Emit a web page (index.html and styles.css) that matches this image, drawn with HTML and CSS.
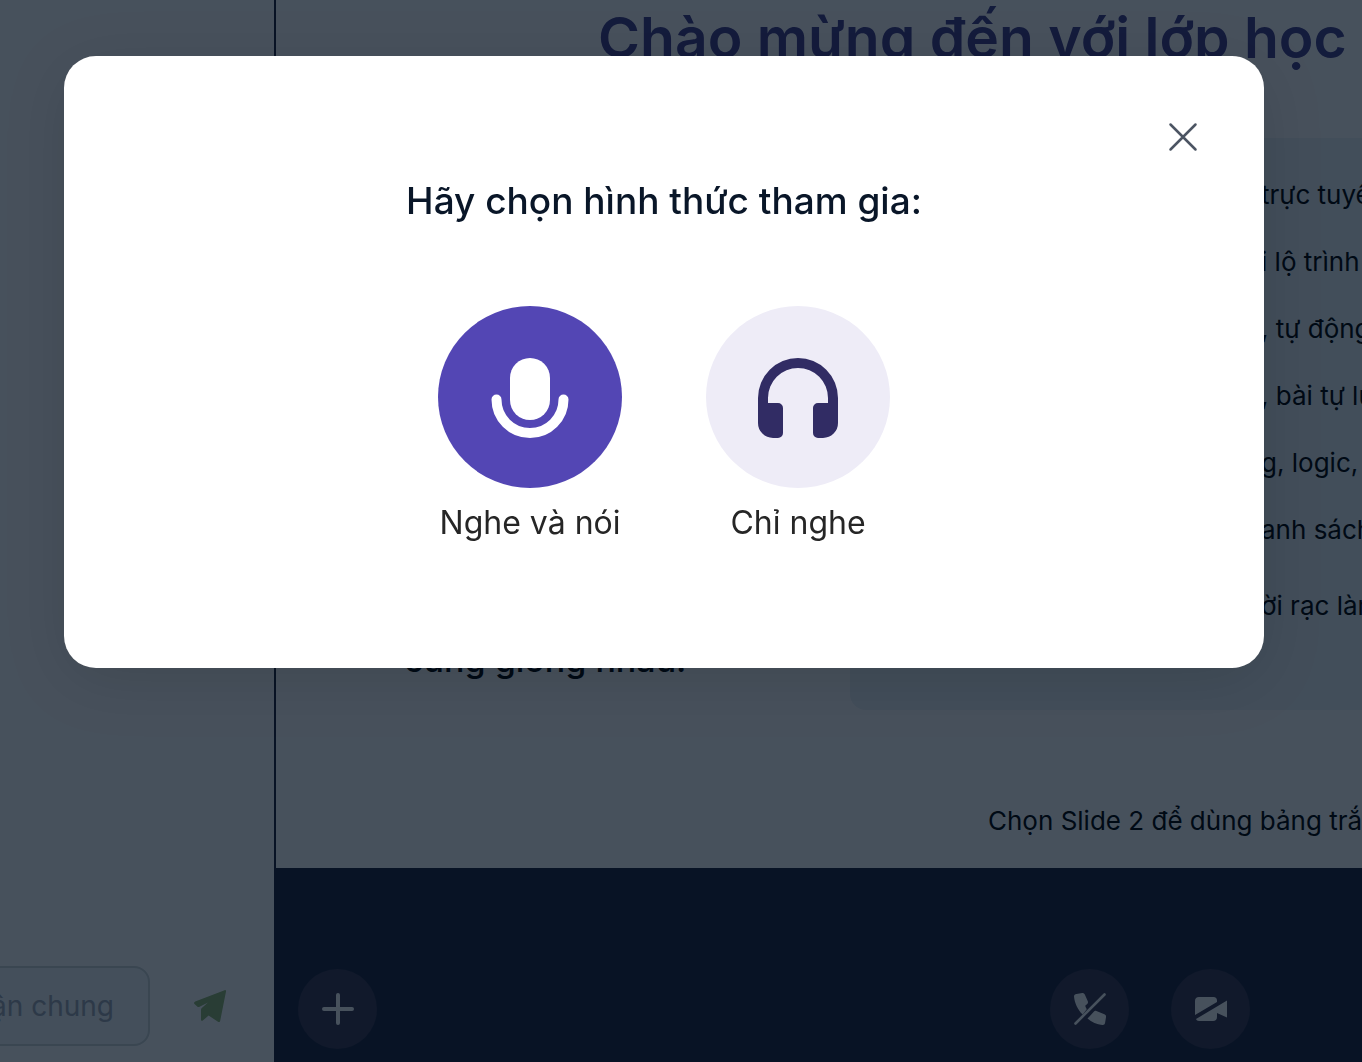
FILE: index.html
```html
<!DOCTYPE html>
<html lang="vi">
<head>
    <meta charset="UTF-8">
    <meta name="viewport" content="width=device-width, initial-scale=1.0">
    <title>Lớp học</title>
    <link rel="stylesheet" href="styles.css">
</head>
<body>
    <div class="classroom">
        <aside class="chat">
            <form class="chat-form">
                <input type="text" class="chat-input" aria-label="Thảo luận chung" placeholder="Thảo luận chung">
                <button type="button" class="send-button" aria-label="Gửi">
                    <svg width="32" height="32" viewBox="0 0 32 32"><path fill="currentColor" d="M30.6.2 1.2 11.4C-.1 12-.3 13.2.5 14.1l3 2.7c.5.4 1.1.4 1.6.1L14 12.5 7.8 18c-.5.5-.8 1-.8 1.7v10c0 1.2 1 1.5 1.8.8l5.8-5 9.4 6.2c1.2.7 2 .2 2.2-1L32 1.5C32.2.3 31.5-.1 30.6.2z"/></svg>
                </button>
            </form>
        </aside>
        <main class="stage">
            <section class="slide">
                <h1 class="slide-title">Chào mừng đến với lớp học</h1>
                <div class="slide-columns">
                    <p class="slide-quote">cũng giống nhau.</p>
                    <ul class="features">
                        <li>trực tuyến</li>
                        <li>i lộ trình</li>
                        <li>, tự động</li>
                        <li>, bài tự luận</li>
                        <li>g, logic,</li>
                        <li>anh sách</li>
                        <li class="last">ời rạc làm</li>
                    </ul>
                </div>
                <p class="slide-note">Chọn Slide 2 để dùng bảng trắng</p>
            </section>
            <footer class="toolbar">
                <button type="button" class="tool-button" aria-label="Thêm">
                    <svg width="32" height="32" viewBox="0 0 32 32"><path d="M16 2v28M2 16h28" fill="none" stroke="currentColor" stroke-width="4" stroke-linecap="round"/></svg>
                </button>
                <div class="call-tools">
                    <button type="button" class="tool-button" aria-label="Rời cuộc gọi">
                        <svg width="32" height="32" viewBox="0 0 32 32">
                            <path fill="currentColor" d="M2.5.9 8.3 0c1.2-.1 2 .4 2.5 1.4l3 6.8c.4 1 .2 2-.6 2.7l-2 1.9c.3 1.2.8 2.3 1.6 3.5L8.7 21.6C3.5 16.4.5 9.8 0 3.2 0 2 1 1.1 2.5.9zM13.5 25.6l6.5-7c.6-.9 1.4-1 2.4-.6l8 3.2c1.2.5 1.8 1.3 1.7 2.5l-1 6c-.3 1.6-1.3 2.4-2.8 2.3-5.4-.3-10.600-2.600-14.800-6.400z"/>
                            <path d="M1.5 30.5 30.5 1.5" stroke="currentColor" stroke-width="2.6" stroke-linecap="round"/>
                        </svg>
                    </button>
                    <button type="button" class="tool-button" aria-label="Tắt camera">
                        <svg width="32" height="32" viewBox="0 0 32 32">
                            <path fill="currentColor" d="M4 4h14.5C20.7 4 22 5.3 22 7.5V9L0 22V8C0 5.5 1.5 4 4 4zM32 7.5v17L22 20v4c0 2.5-1.5 4-4 4H4c-1.5 0-2.6-.7-3-2L22 13.5z"/>
                        </svg>
                    </button>
                </div>
            </footer>
        </main>
    </div>

    <div class="overlay">
        <div class="modal" role="dialog" aria-labelledby="modal-title">
            <button type="button" class="close-button" aria-label="Đóng">
                <svg width="30" height="30" viewBox="0 0 30 30"><path d="M2.5 2.5l25 25M27.5 2.5l-25 25" fill="none" stroke="currentColor" stroke-width="2.5" stroke-linecap="round"/></svg>
            </button>
            <h2 class="modal-title" id="modal-title">Hãy chọn hình thức tham gia:</h2>
            <div class="options">
                <button type="button" class="option">
                    <span class="option-icon primary">
                        <svg width="80" height="80" viewBox="0 0 80 80">
                            <rect x="20" y="0" width="40" height="62" rx="20" fill="currentColor"/>
                            <path d="M6.5 41.5a33.5 33.5 0 0 0 67 0" fill="none" stroke="currentColor" stroke-width="10" stroke-linecap="round"/>
                        </svg>
                    </span>
                    Nghe và nói
                </button>
                <button type="button" class="option">
                    <span class="option-icon">
                        <svg width="80" height="80" viewBox="0 0 80 80"><path fill="currentColor" d="M0 40a40 40 0 0 1 80 0v25a15 15 0 0 1-15 15h-5a5 5 0 0 1-5-5V50a5 5 0 0 1 5-5h10v-5a30 30 0 0 0-60 0v5h10a5 5 0 0 1 5 5v25a5 5 0 0 1-5 5h-5A15 15 0 0 1 0 65z"/></svg>
                    </span>
                    Chỉ nghe
                </button>
            </div>
        </div>
    </div>
</body>
</html>
```
FILE: styles.css
```css
* {
    box-sizing: border-box;
}
body {
    font-family: Inter, "Noto Sans", sans-serif;
    margin: 0;
    color: #000;
    background-color: #1e233b;
}
button {
    font-family: inherit;
    padding: 0;
    border: none;
    background: none;
    cursor: pointer;
}
svg {
    display: block;
}
h1, h2, p, ul {
    margin: 0;
    padding: 0;
    white-space: nowrap;
}
.classroom {
    display: flex;
    gap: 2px;
    height: 100vh;
    overflow: hidden;
}

/* Chat sidebar */
.chat {
    flex: 0 0 274px;
    display: flex;
    flex-direction: column;
    justify-content: flex-end;
    overflow: hidden;
    padding-bottom: 16px;
    background-color: #fff;
}
.chat-form {
    display: flex;
    justify-content: flex-end;
    align-items: center;
    gap: 44px;
    padding-right: 48px;
}
.chat-input {
    flex: 0 0 360px;
    height: 80px;
    padding: 0 34px;
    border: 2px solid #cfd6d8;
    border-radius: 16px;
    background-color: #f2f8fa;
    font-family: inherit;
    font-size: 28px;
    text-align: right;
}
.chat-input::placeholder {
    color: #a1a8b6;
    opacity: 1;
}
.send-button {
    color: #92b672;
}

/* Slide */
.stage {
    flex: 1;
    min-width: 0;
    display: flex;
    flex-direction: column;
}
.slide {
    flex: 1;
    overflow: hidden;
    background-color: #fff;
}
.slide-title {
    padding: 4px 0 0 322px;
    font-size: 57px;
    line-height: 68px;
    font-weight: 600;
    color: #47408b;
}
.slide-columns {
    display: flex;
    align-items: flex-end;
    margin-top: 66px;
}
.slide-quote {
    flex: 0 0 574px;
    padding: 0 0 28px 128px;
    font-size: 34px;
    line-height: 44px;
    font-weight: 500;
}
.features {
    flex: 1;
    height: 572px;
    padding: 23px 0 0 411px;
    border-radius: 16px 0 0 16px;
    background-color: #ecf3f6;
    list-style: none;
    font-size: 26px;
    line-height: 67px;
}
.features .last {
    padding-top: 9px;
}
.slide-note {
    padding: 94px 0 0 712px;
    font-size: 26px;
    line-height: 34px;
}

/* Bottom toolbar */
.toolbar {
    display: flex;
    justify-content: space-between;
    align-items: center;
    height: 194px;
    padding: 88px 112px 0 22px;
}
.call-tools {
    display: flex;
    gap: 42px;
}
.tool-button {
    display: flex;
    justify-content: center;
    align-items: center;
    width: 79px;
    height: 80px;
    border-radius: 50%;
    background-color: #3d364f;
    color: #fff;
}

/* Join dialog */
.overlay {
    position: fixed;
    inset: 0;
    padding: 56px 98px 56px 64px;
    background-color: rgba(0, 14, 29, 0.72);
}
.modal {
    position: relative;
    padding: 120px 64px 123px;
    border-radius: 32px;
    background-color: #fff;
    box-shadow: 0 12px 64px rgba(0, 0, 0, 0.12);
}
.close-button {
    position: absolute;
    top: 66px;
    right: 66px;
    color: #4c5563;
}
.modal-title {
    font-size: 37px;
    line-height: 50px;
    font-weight: 500;
    text-align: center;
    color: #091628;
}
.options {
    display: flex;
    justify-content: center;
    gap: 84px;
    margin-top: 80px;
}
.option {
    width: 184px;
    font-size: 32px;
    line-height: 44px;
    color: #262626;
    white-space: nowrap;
}
.option-icon {
    display: flex;
    justify-content: center;
    align-items: center;
    height: 182px;
    margin-bottom: 13px;
    padding-top: 2px;
    border-radius: 50%;
    background-color: #eeecf7;
    color: #312c64;
}
.option-icon.primary {
    background-color: #5346b4;
    color: #fff;
}
```
